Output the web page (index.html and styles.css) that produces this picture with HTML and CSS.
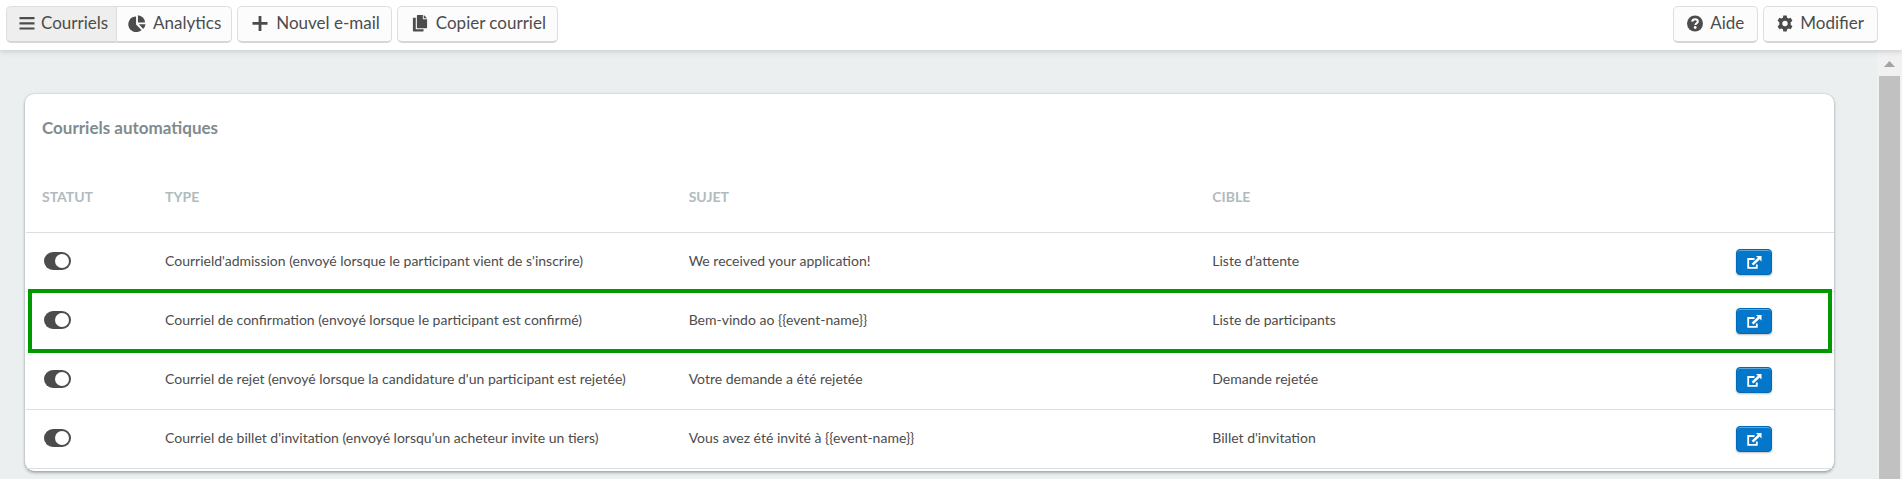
FILE: index.html
```html
<!DOCTYPE html>
<html lang="fr">
<head>
<meta charset="utf-8">
<title>Courriels automatiques</title>
<link rel="stylesheet" href="styles.css">
</head>
<body>
<svg class="sprite" aria-hidden="true">
  <symbol id="external" viewBox="0 0 15 13">
    <path d="M7.500 3H1.200v8.800h8.600V8.500" fill="none" stroke="currentColor" stroke-width="1.800"/>
    <path d="M5.500 8.600L12 2.500" fill="none" stroke="currentColor" stroke-width="2.500"/>
    <path d="M9 0H14.500V5.500z" fill="currentColor"/>
  </symbol>
</svg>
<header class="toolbar">
  <div class="group">
    <button class="btn active" type="button">
      <svg class="icon" viewBox="0 0 16 16"><path d="M.5 1.500h15v2.200H.5zM.5 6.700h15v2.200H.5zM.5 11.900h15v2.200H.5z"/></svg>Courriels
    </button>
    <button class="btn" type="button">
      <svg class="icon wide" viewBox="0 0 18 18"><path d="M8 1.500V10l5.800 5.800A8.300 8.300 0 1 1 8 1.500z"/><path d="M10 .3A8 8 0 0 1 17.500 8H10z"/><path d="M11 9.800h7a8 8 0 0 1-2.500 5z"/></svg>Analytics
    </button>
  </div>
  <button class="btn action" type="button">
    <svg class="icon" viewBox="0 0 16 16"><path d="M6.600.5h2.800v6h6.100v2.800H9.400v6.200H6.600V9.300H.5V6.500h6.100z"/></svg>Nouvel e-mail
  </button>
  <button class="btn action" type="button">
    <svg class="icon" viewBox="0 0 16 18"><path d="M5.500 0H11v4.500h4.500v8.700a.8.800 0 0 1-.8.800H5.500a.8.800 0 0 1-.8-.8V.8a.8.800 0 0 1 .8-.8z"/><path d="M12 0l3.500 3.500H12z"/><path d="M.5 3h3v12.200h8.300v1.500a.8.800 0 0 1-.8.800H1.300a.8.800 0 0 1-.8-.8z"/></svg>Copier courriel
  </button>
  <div class="group-end">
    <button class="btn" type="button">
      <svg class="icon" viewBox="0 0 16 16"><circle cx="8" cy="8" r="8"/><path class="mark" d="M5.200 6.100C5.400 4.400 6.500 3.700 8 3.700c1.600 0 2.800.9 2.800 2.200 0 1.900-2.400 1.700-2.400 3.500"/><circle class="dot" cx="8.200" cy="12" r="1.400"/></svg>Aide
    </button>
    <button class="btn" type="button">
      <svg class="icon" viewBox="0 0 16 16"><path fill-rule="evenodd" d="M6.300 0h3.400l.4 2.200 1.500.9 2.100-.8 1.700 2.900-1.700 1.500v2.600l1.700 1.500-1.700 2.900-2.100-.8-1.500.9-.4 2.200H6.300l-.4-2.200-1.500-.9-2.100.8L.6 10.800l1.700-1.500V6.700L.6 5.200l1.700-2.900 2.100.8 1.500-.9zM8 5.300a2.700 2.700 0 1 0 0 5.400 2.700 2.700 0 0 0 0-5.400z"/></svg>Modifier
    </button>
  </div>
</header>
<div class="body">
  <main class="content">
    <section class="card">
      <h1 class="card-title">Courriels automatiques</h1>
      <table class="mails">
        <colgroup><col class="c-status"><col><col><col><col class="c-action"></colgroup>
        <thead>
          <tr><th>STATUT</th><th>TYPE</th><th>SUJET</th><th>CIBLE</th><th></th></tr>
        </thead>
        <tbody>
          <tr>
            <td><input class="toggle" type="checkbox" checked aria-label="Activer le courriel d'admission"></td>
            <td>Courrield'admission (envoyé lorsque le participant vient de s'inscrire)</td>
            <td>We received your application!</td>
            <td>Liste d’attente</td>
            <td><button class="open" type="button" aria-label="Ouvrir"><svg class="ext"><use href="#external"/></svg></button></td>
          </tr>
          <tr class="highlight">
            <td><input class="toggle" type="checkbox" checked aria-label="Activer le courriel de confirmation"></td>
            <td>Courriel de confirmation (envoyé lorsque le participant est confirmé)</td>
            <td>Bem-vindo ao {{event-name}}</td>
            <td>Liste de participants</td>
            <td><button class="open" type="button" aria-label="Ouvrir"><svg class="ext"><use href="#external"/></svg></button></td>
          </tr>
          <tr>
            <td><input class="toggle" type="checkbox" checked aria-label="Activer le courriel de rejet"></td>
            <td>Courriel de rejet (envoyé lorsque la candidature d'un participant est rejetée)</td>
            <td>Votre demande a été rejetée</td>
            <td>Demande rejetée</td>
            <td><button class="open" type="button" aria-label="Ouvrir"><svg class="ext"><use href="#external"/></svg></button></td>
          </tr>
          <tr>
            <td><input class="toggle" type="checkbox" checked aria-label="Activer le courriel de billet d'invitation"></td>
            <td>Courriel de billet d'invitation (envoyé lorsqu’un acheteur invite un tiers)</td>
            <td>Vous avez été invité à {{event-name}}</td>
            <td>Billet d'invitation</td>
            <td><button class="open" type="button" aria-label="Ouvrir"><svg class="ext"><use href="#external"/></svg></button></td>
          </tr>
        </tbody>
      </table>
    </section>
  </main>
  <div class="scrollbar" aria-hidden="true">
    <svg class="arrow" viewBox="0 0 11 6"><path d="M5.500 0L11 6H0z"/></svg>
    <div class="thumb"></div>
  </div>
</div>
</body>
</html>
```
FILE: styles.css
```css
* { box-sizing: border-box; }
html, body { height: 100%; }
body {
  margin: 0;
  display: flex;
  flex-direction: column;
  overflow: hidden;
  background: #ebeff0;
  color: #4c4c4c;
  font-family: Lato, "Liberation Sans", sans-serif;
  font-size: 14px;
}
.sprite { display: none; }

.toolbar {
  display: flex;
  gap: 5px;
  flex: none;
  padding: 6px 24px 7px 6px;
  background: #fff;
  box-shadow: 0 1px 6px rgba(60, 80, 80, .25);
  z-index: 1;
}
.btn {
  display: flex;
  align-items: center;
  gap: 7px;
  height: 37px;
  padding: 0 13px 2px;
  border: 1px solid #dedede;
  border-bottom: 2px solid #d6d6d6;
  border-radius: 5px;
  background: #fcfcfc;
  color: #4c4c4c;
  font: 17px/20px Lato, "Liberation Sans", sans-serif;
  white-space: nowrap;
}
.btn.action { gap: 8px; padding-right: 11px; padding-left: 14px; }
.group { display: flex; }
.group .btn { padding-right: 10px; padding-left: 11px; }
.group .btn:first-child { gap: 6px; padding-right: 8px; padding-left: 12px; border-right: 0; border-radius: 5px 0 0 5px; }
.group .btn:last-child { border-radius: 0 5px 5px 0; }
.group .btn.active { background: #eee; }
.group-end { display: flex; gap: 5px; margin-left: auto; }
.icon { flex: none; width: 16px; height: 17px; fill: #4c4c4c; }
.icon.wide { width: 18px; }
.mark { fill: none; stroke: #fff; stroke-width: 2; }
.dot { fill: #fff; }

.body { display: flex; flex: 1; min-height: 0; }
.content { flex: 1; padding: 44px 43px 0 25px; }
.card {
  padding: 0 0 2px 1px;
  border-radius: 9px;
  background: #fff;
  box-shadow: 0 0 2px rgba(120, 135, 140, .5), 0 2px 3px rgba(90, 100, 100, .45);
}
.card-title {
  margin: 0;
  padding: 24px 16px;
  color: #808b8e;
  font-size: 17px;
  line-height: 20px;
}
.mails { width: 100%; table-layout: fixed; border-collapse: separate; border-spacing: 0; }
.c-status { width: 123px; }
.c-action { width: 114px; }
th, td {
  height: 59px;
  padding: 0 16px 2px;
  border-bottom: 1px solid #dcdfe0;
  text-align: left;
  line-height: 20px;
}
th { height: 71px; padding-bottom: 0; color: #b0bbbe; }
td:last-child { padding-bottom: 0; }
.highlight { position: relative; }
.highlight td:first-child::after {
  content: "";
  position: absolute;
  inset: -3px 2px -2px;
  border: 4px solid #090;
  pointer-events: none;
}
.toggle {
  appearance: none;
  display: block;
  width: 27px;
  height: 18px;
  margin: 0 2px;
  padding: 2px;
  border-radius: 9px;
  background: #4c4c4c;
}
.toggle::before {
  content: "";
  display: block;
  width: 14px;
  height: 14px;
  margin-left: auto;
  border-radius: 50%;
  background: #fff;
}
.open {
  display: flex;
  align-items: center;
  justify-content: center;
  width: 36px;
  height: 26px;
  padding: 0;
  border: 1px solid #0069b8;
  border-radius: 4px;
  background: #0577ca;
  color: #fff;
  box-shadow: inset 0 1px 0 #5ba8df, 0 1px 2px rgba(0, 0, 0, .25);
}
.ext { width: 15px; height: 13px; }

.scrollbar {
  display: flex;
  flex-direction: column;
  align-items: center;
  gap: 9px;
  width: 25px;
  padding: 11px 2px 0;
  background: #f1f1f1;
}
.arrow { flex: none; width: 11px; height: 6px; fill: #a3a3a3; }
.thumb { flex: 1; align-self: stretch; background: #c1c1c1; }
```
